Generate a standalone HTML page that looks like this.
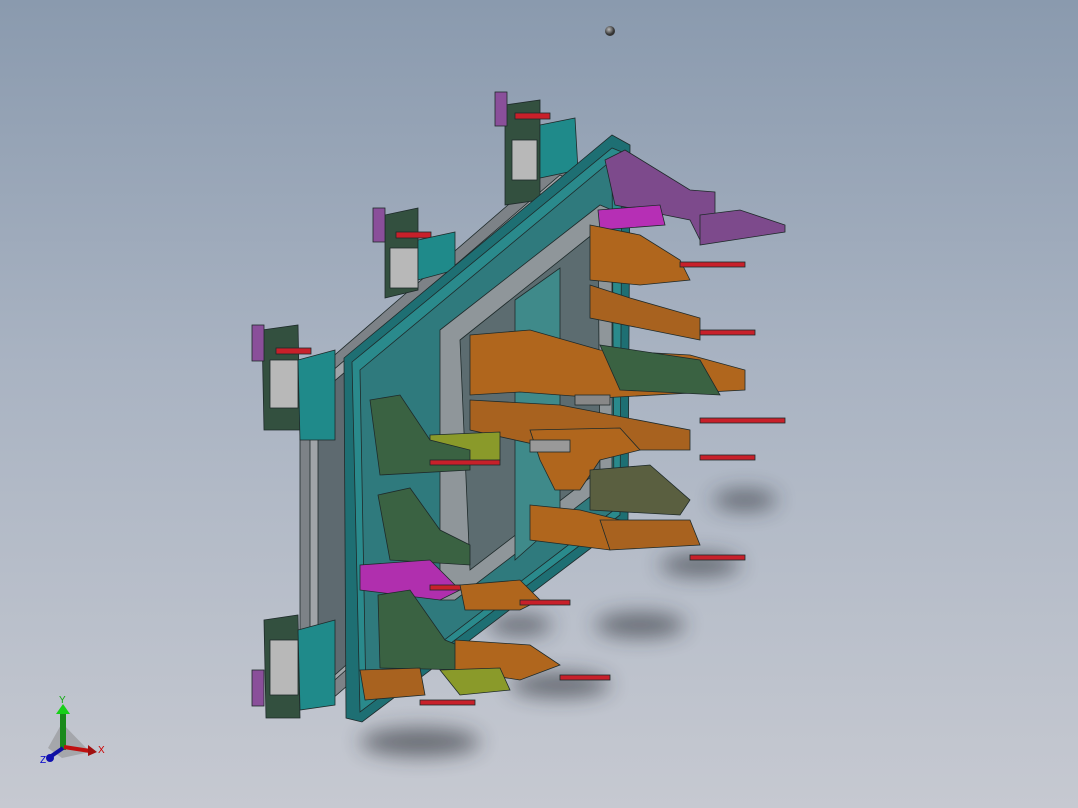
<!DOCTYPE html>
<html><head><style>
html,body{margin:0;padding:0;}
body{width:1078px;height:808px;overflow:hidden;background:linear-gradient(180deg,#8a9aae 0%,#a9b3c2 45%,#c6c9d1 100%);font-family:"Liberation Sans",sans-serif;}
svg{position:absolute;left:0;top:0;}
</style></head><body>
<svg width="1078" height="808" viewBox="0 0 1078 808">
<defs>
<filter id="b" x="-50%" y="-50%" width="200%" height="200%"><feGaussianBlur stdDeviation="10"/></filter>
<radialGradient id="ball" cx="40%" cy="35%"><stop offset="0" stop-color="#bbb"/><stop offset="1" stop-color="#333"/></radialGradient>
</defs>
<g filter="url(#b)" fill="#2a2d35" opacity="0.6">
<ellipse cx="420" cy="742" rx="60" ry="14"/>
<ellipse cx="560" cy="685" rx="50" ry="12"/>
<ellipse cx="640" cy="625" rx="45" ry="12"/>
<ellipse cx="700" cy="565" rx="40" ry="11"/>
<ellipse cx="745" cy="500" rx="32" ry="10"/>
<ellipse cx="520" cy="625" rx="32" ry="10"/>
</g>
<circle cx="610" cy="31" r="5" fill="url(#ball)"/>
<g stroke="#1e2a2a" stroke-width="0.8">
<polygon points="300,385 560,160 585,170 585,480 325,705 300,705" fill="#7d8287"/>
<polygon points="310,390 560,175 570,180 570,470 318,695 310,695" fill="#a0a4a8"/>
<polygon points="318,395 565,185 565,470 318,690" fill="#5e6a70"/>
<polygon points="505,105 540,100 540,200 505,205" fill="#33503f"/>
<rect x="512" y="140" width="25" height="40" fill="#b8b8b8"/>
<rect x="495" y="92" width="12" height="34" fill="#8a4f9a"/>
<rect x="515" y="113" width="35" height="6" fill="#c8202a"/>
<polygon points="540,125 575,118 578,170 540,178" fill="#1f8a8a"/>
<polygon points="385,215 418,208 418,290 385,298" fill="#33503f"/>
<rect x="390" y="248" width="28" height="40" fill="#b8b8b8"/>
<rect x="373" y="208" width="12" height="34" fill="#8a4f9a"/>
<rect x="396" y="232" width="35" height="6" fill="#c8202a"/>
<polygon points="418,240 455,232 455,270 418,280" fill="#1f8a8a"/>
<polygon points="262,330 298,325 300,430 264,430" fill="#33503f"/>
<rect x="270" y="360" width="28" height="48" fill="#b8b8b8"/>
<rect x="252" y="325" width="12" height="36" fill="#8a4f9a"/>
<rect x="276" y="348" width="35" height="6" fill="#c8202a"/>
<polygon points="298,360 335,350 335,440 300,440" fill="#1f8a8a"/>
<polygon points="264,620 298,615 300,718 266,718" fill="#33503f"/>
<rect x="270" y="640" width="28" height="55" fill="#b8b8b8"/>
<rect x="252" y="670" width="12" height="36" fill="#8a4f9a"/>
<polygon points="298,630 335,620 335,705 300,710" fill="#1f8a8a"/>
<polygon points="344,358 612,135 630,145 628,520 362,722 346,718" fill="#1e6f73"/>
<polygon points="352,362 612,148 622,152 620,515 360,712" fill="#2a8a8c"/>
<polygon points="360,370 612,160 614,510 366,700" fill="#2f7a7d"/>
<polygon points="440,330 600,205 612,210 612,480 455,600 440,600" fill="#8f969a"/>
<polygon points="460,340 598,230 600,470 470,570" fill="#5c6c70"/>
<polygon points="515,300 560,268 560,520 515,560" fill="#3f8a8a"/>
<polygon points="605,160 625,150 690,190 715,192 715,225 700,240 690,220 615,205" fill="#7d4a8c"/>
<polygon points="700,215 740,210 785,225 785,232 700,245" fill="#7d4a8c"/>
<polygon points="598,210 660,205 665,225 600,230" fill="#b62fb5"/>
<polygon points="590,225 640,235 680,260 690,280 640,285 590,280" fill="#b0661d"/>
<rect x="680" y="262" width="65" height="5" fill="#c8202a"/>
<polygon points="590,285 630,298 700,318 700,340 590,318" fill="#a8621f"/>
<rect x="700" y="330" width="55" height="5" fill="#c8202a"/>
<polygon points="470,335 530,330 600,350 690,355 745,370 745,390 600,398 520,392 470,395" fill="#b0661d"/>
<polygon points="600,345 700,360 720,395 620,390" fill="#3a6242"/>
<polygon points="470,400 560,405 690,430 690,450 560,450 470,430" fill="#a8621f"/>
<rect x="700" y="418" width="85" height="5" fill="#c8202a"/>
<rect x="700" y="455" width="55" height="5" fill="#c8202a"/>
<polygon points="530,430 620,428 640,450 600,460 580,490 555,490 540,460" fill="#b0661d"/>
<polygon points="430,435 500,432 500,460 430,465" fill="#8a9a2a"/>
<polygon points="370,400 400,395 430,440 470,450 470,470 380,475" fill="#3a6242"/>
<rect x="430" y="460" width="70" height="5" fill="#c8202a"/>
<polygon points="590,470 650,465 690,500 680,515 590,510" fill="#5a5f40"/>
<polygon points="530,505 580,510 640,525 610,550 530,540" fill="#b0661d"/>
<polygon points="600,520 690,520 700,545 610,550" fill="#a8621f"/>
<rect x="690" y="555" width="55" height="5" fill="#c8202a"/>
<polygon points="378,495 410,488 440,530 470,545 470,565 390,560" fill="#3a6242"/>
<polygon points="360,565 430,560 460,590 440,600 360,590" fill="#b02fae"/>
<rect x="430" y="585" width="40" height="5" fill="#c8202a"/>
<polygon points="460,585 520,580 540,600 520,610 465,610" fill="#b0661d"/>
<rect x="520" y="600" width="50" height="5" fill="#c8202a"/>
<polygon points="378,595 410,590 445,640 470,650 470,670 380,668" fill="#3a6242"/>
<polygon points="455,640 530,645 560,665 520,680 455,670" fill="#b0661d"/>
<polygon points="440,670 500,668 510,690 460,695" fill="#8a9a2a"/>
<rect x="560" y="675" width="50" height="5" fill="#c8202a"/>
<polygon points="360,670 420,668 425,695 365,700" fill="#a8621f"/>
<rect x="420" y="700" width="55" height="5" fill="#c8202a"/>
<rect x="530" y="440" width="40" height="12" fill="#999"/>
<rect x="575" y="395" width="35" height="10" fill="#888"/>
</g>
<g>
<path d="M62,723 L90,752 L62,758 L48,748 Z" fill="#888" opacity="0.5"/>
<rect x="60" y="712" width="6" height="38" fill="#1a8a1a"/>
<path d="M56,714 L63,704 L70,714 Z" fill="#18d018"/>
<line x1="64" y1="747" x2="90" y2="751" stroke="#c01010" stroke-width="4"/>
<path d="M88,745 L97,752 L88,756 Z" fill="#a01010"/>
<line x1="63" y1="748" x2="50" y2="757" stroke="#1010a0" stroke-width="4"/>
<circle cx="50" cy="758" r="4" fill="#1010b0"/>
<text x="59" y="703" font-size="10" fill="#1a1">Y</text>
<text x="98" y="753" font-size="10" fill="#c00">X</text>
<text x="40" y="763" font-size="10" fill="#00c">Z</text>
</g>
</svg>
</body></html>
